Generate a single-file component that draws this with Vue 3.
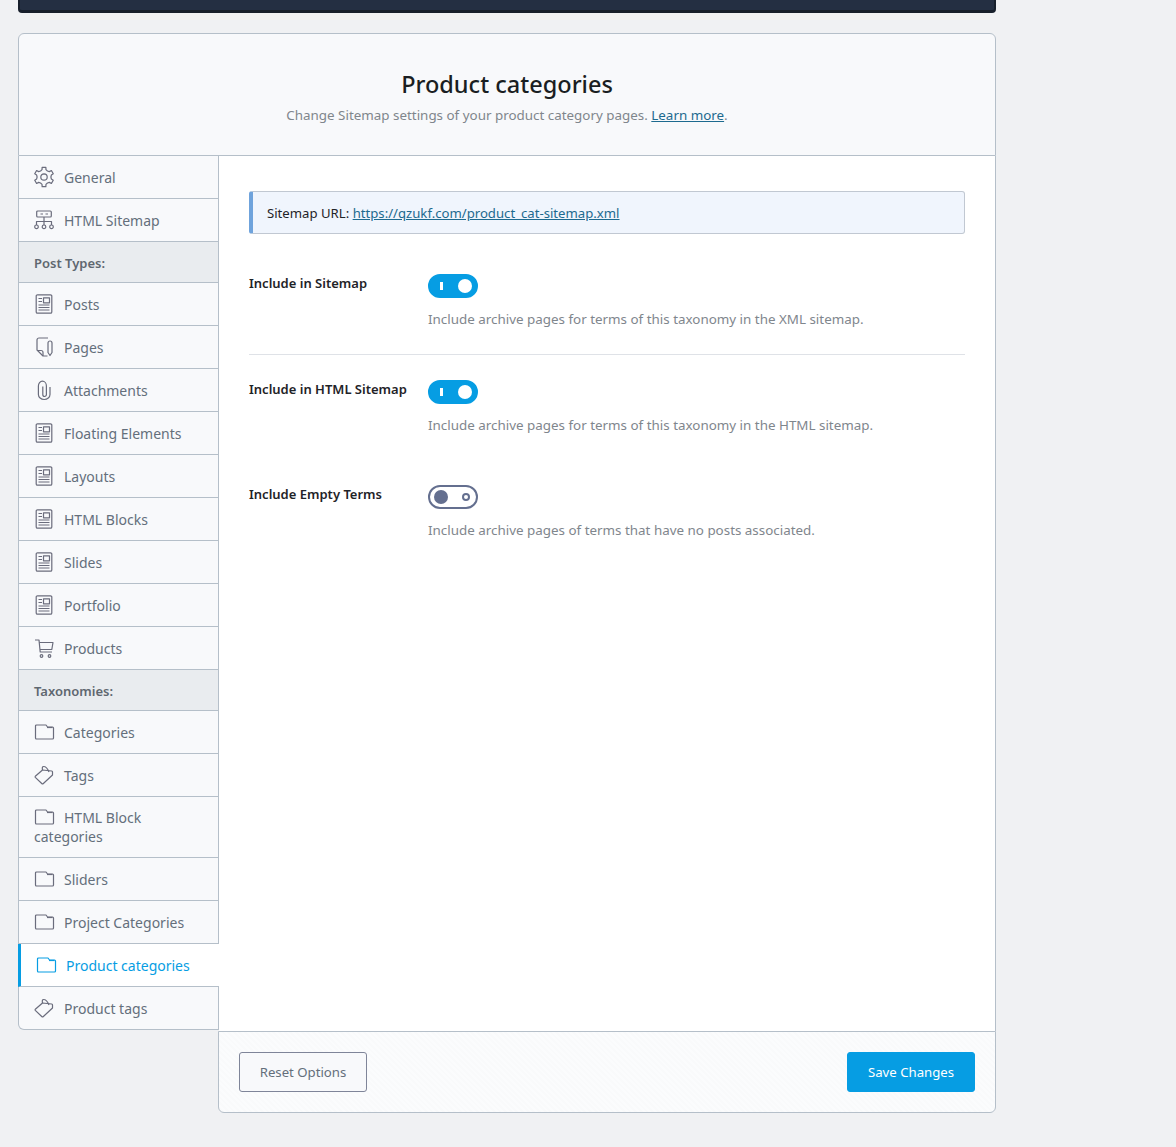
<script setup>
function gearPath() {
  const c = 10
  const pts = []
  for (let k = 0; k < 6; k++) {
    const a = ((-90 + 60 * k) * Math.PI) / 180
    const steps = [[-30, 6.9], [-15, 7.6], [-11, 9.8], [11, 9.8], [15, 7.6]]
    for (const [off, r] of steps) {
      const t = a + (off * Math.PI) / 180
      pts.push((c + r * Math.cos(t)).toFixed(2) + ' ' + (c + r * Math.sin(t)).toFixed(2))
    }
  }
  return 'M' + pts.join('L') + 'z'
}

const icons = {
  gear: [gearPath(), 'M10 6.800a3.200 3.200 0 1 0 0 6.400 3.200 3.200 0 0 0 0-6.400z'],
  sitemap: [
    'M3.700 1h12.600a1 1 0 0 1 1 1v4a1 1 0 0 1-1 1H3.700a1 1 0 0 1-1-1V2a1 1 0 0 1 1-1z',
    'M6.500 4h2.500M11.500 4h2.500',
    'M10 7v8M2.500 15v-3.500h15V15',
    'M2.500 15a1.800 1.800 0 1 0 0 3.600 1.800 1.800 0 0 0 0-3.600zM10 15a1.800 1.800 0 1 0 0 3.600 1.800 1.800 0 0 0 0-3.600zM17.500 15a1.800 1.800 0 1 0 0 3.600 1.800 1.800 0 0 0 0-3.600z',
  ],
  post: [
    'M3.500.8h13a1.300 1.300 0 0 1 1.300 1.300v15.800a1.300 1.300 0 0 1-1.300 1.300h-13a1.300 1.300 0 0 1-1.300-1.300V2.100A1.300 1.300 0 0 1 3.500.8z',
    'M9.500 3.800h6v5h-6z',
    'M4.500 4.500h3.500M4.500 7.500h3.500M4.500 11h11M4.500 13.500h11M4.500 16h11',
  ],
  page: [
    'M14 1H5a2 2 0 0 0-2 2v10l6 6h4.500',
    'M3 13.500h4a2 2 0 0 1 2 2V19',
    'M14 6a2 2 0 0 1 4 0v9.500l-2 3-2-3z',
  ],
  clip: ['M16 7v7.500a5.800 5 0 0 1-11.600 0V6a4 4.800 0 0 1 8 0v8.500a1.800 2 0 0 1-3.600 0V6.500'],
  cart: [
    'M1 2h4l1.200 12h11.800',
    'M5.300 4.500H19l-1.200 7H6',
    'M7.500 16.700a1.300 1.300 0 1 0 0 2.600 1.300 1.300 0 0 0 0-2.600zM15.500 16.700a1.300 1.300 0 1 0 0 2.600 1.300 1.300 0 0 0 0-2.600z',
  ],
  folder: ['M1.500 4a1 1 0 0 1 1-1h9.500l1.500 2h5a1 1 0 0 1 1 1v10a1 1 0 0 1-1 1h-16a1 1 0 0 1-1-1z', 'M13 5.500h5.500'],
  tag: [
    'M8.500 5 1.300 11.300a.8.8 0 0 0 0 1.100l6.700 6.300a.8.8 0 0 0 1.100 0L18.500 10V7a1 1 0 0 0-.8-1z',
    'M15 7C14 4.500 12 1.500 9.500 1.500 8.500 1.500 8 2.500 8.500 5',
  ],
}

const menu = [
  { label: 'General', icon: 'gear' },
  { label: 'HTML Sitemap', icon: 'sitemap' },
  { label: 'Post Types:', group: true },
  { label: 'Posts', icon: 'post' },
  { label: 'Pages', icon: 'page' },
  { label: 'Attachments', icon: 'clip' },
  { label: 'Floating Elements', icon: 'post' },
  { label: 'Layouts', icon: 'post' },
  { label: 'HTML Blocks', icon: 'post' },
  { label: 'Slides', icon: 'post' },
  { label: 'Portfolio', icon: 'post' },
  { label: 'Products', icon: 'cart' },
  { label: 'Taxonomies:', group: true },
  { label: 'Categories', icon: 'folder' },
  { label: 'Tags', icon: 'tag' },
  { label: 'HTML Block categories', icon: 'folder', tall: true },
  { label: 'Sliders', icon: 'folder' },
  { label: 'Project Categories', icon: 'folder' },
  { label: 'Product categories', icon: 'folder', active: true },
  { label: 'Product tags', icon: 'tag' },
]

const fields = [
  { label: 'Include in Sitemap', desc: 'Include archive pages for terms of this taxonomy in the XML sitemap.', on: true },
  { label: 'Include in HTML Sitemap', desc: 'Include archive pages for terms of this taxonomy in the HTML sitemap.', on: true },
  { label: 'Include Empty Terms', desc: 'Include archive pages of terms that have no posts associated.', on: false },
]
</script>

<template>
  <div class="page">
    <div class="topbar"></div>
    <header class="head">
      <h1>Product categories</h1>
      <p>Change Sitemap settings of your product category pages. <a href="#">Learn more</a>.</p>
    </header>
    <div class="body">
      <nav class="side">
        <template v-for="item in menu" :key="item.label">
          <div v-if="item.group" class="group">{{ item.label }}</div>
          <a v-else href="#" class="item" :class="{ active: item.active, tall: item.tall }">
            <span class="ico">
              <svg viewBox="0 0 20 20" width="20" height="20" fill="none" stroke="currentColor" stroke-width="1.2" stroke-linejoin="round">
                <path v-for="d in icons[item.icon]" :key="d" :d="d" />
              </svg>
            </span>{{ item.label }}
          </a>
        </template>
      </nav>
      <main class="main">
        <div class="content">
          <div class="notice">Sitemap URL: <a href="#">https://qzukf.com/product_cat-sitemap.xml</a></div>
          <div v-for="(f, i) in fields" :key="f.label" class="field" :class="'f' + i">
            <div class="label">{{ f.label }}</div>
            <div class="ctl">
              <span class="switch" :class="{ on: f.on }">
                <i class="mark"></i>
                <i class="knob"></i>
              </span>
              <p class="desc">{{ f.desc }}</p>
            </div>
          </div>
        </div>
        <footer class="foot">
          <button class="btn reset">Reset Options</button>
          <button class="btn save">Save Changes</button>
        </footer>
      </main>
    </div>
  </div>
</template>

<style>
html, body { background: #f0f1f3; }
</style>

<style scoped>
.page {
  width: 978px;
  padding: 0 0 34px 18px;
  font-family: "Noto Sans", sans-serif;
  font-size: 14px;
  line-height: 19px;
  color: #1f2328;
}
.topbar {
  height: 13px;
  box-sizing: border-box;
  background: #242f42;
  border-bottom: 3px solid #171f2b;
  border-right: 2px solid #171f2b;
  border-left: 2px solid #171f2b;
  border-radius: 0 0 4px 4px;
  margin-bottom: 20px;
}
.head {
  height: 123px;
  box-sizing: border-box;
  background: #f8f9fb;
  border: 1px solid #b5bfc9;
  border-radius: 6px 6px 0 0;
  text-align: center;
  padding-top: 34px;
}
.head h1 {
  margin: 0;
  font-size: 23.5px;
  line-height: 33px;
  font-weight: 500;
  color: #1a1e22;
}
.head p {
  margin: 5px 0 0;
  font-size: 13.4px;
  color: #80868c;
}
.head a { color: #1d6a8f; }
.body {
  display: flex;
  align-items: flex-start;
}
.side {
  width: 201px;
  flex: none;
  box-sizing: border-box;
  background: #f8f9fb;
  border: 1px solid #b5bfc9;
  border-top: 0;
  border-radius: 0 0 0 6px;
  position: relative;
  z-index: 1;
}
.item {
  display: block;
  padding: 12px 15px 11px;
  color: #646f7b;
  text-decoration: none;
  border-bottom: 1px solid #b5bfc9;
}
.item.tall { padding-top: 11px; }
.item:last-child { border-bottom: 0; }
.item.active {
  background: #fff;
  color: #069de3;
  border-left: 3px solid #069de3;
  margin: 0 -1px 0 -1px;
}
.ico {
  display: inline-block;
  width: 20px;
  height: 19px;
  margin-right: 10px;
  vertical-align: top;
  color: #6a6c7c;
}
.active .ico { color: #069de3; }
.ico svg {
  display: block;
  margin-top: -1px;
  overflow: visible;
}
.group {
  height: 40px;
  padding: 0 15px;
  line-height: 42px;
  font-size: 13px;
  font-weight: 600;
  color: #5f6770;
  background: #e9ecef;
  border-bottom: 1px solid #b5bfc9;
}
.main {
  flex: 1;
  margin-left: -1px;
  display: flex;
  flex-direction: column;
}
.content {
  height: 875px;
  box-sizing: border-box;
  background: #fff;
  border-right: 1px solid #b5bfc9;
  margin-left: 1px;
  padding: 35px 30px 0;
}
.notice {
  height: 43px;
  box-sizing: border-box;
  background: #f0f5fd;
  border: 1px solid #c1c8d2;
  border-left: 4px solid #6fa3dc;
  border-radius: 3px;
  padding: 12px 14px;
  font-size: 13.16px;
}
.notice a { color: #1d6a8f; }
.field {
  display: flex;
  padding-top: 40px;
}
.f0 {
  height: 121px;
  box-sizing: border-box;
  border-bottom: 1px solid #dfe2e7;
}
.f1 {
  height: 105px;
  box-sizing: border-box;
  padding-top: 25px;
}
.f2 { padding-top: 25px; }
.label {
  width: 179px;
  flex: none;
  font-size: 13px;
  font-weight: 600;
  line-height: 19px;
  color: #1f2328;
}
.switch {
  display: block;
  position: relative;
  width: 50px;
  height: 24px;
  box-sizing: border-box;
  border-radius: 12px;
  border: 2px solid #646f8f;
}
.switch.on {
  background: #069de3;
  border-color: #069de3;
}
.knob {
  position: absolute;
  top: 3px;
  left: 4px;
  width: 14px;
  height: 14px;
  border-radius: 50%;
  background: #646f8f;
}
.on .knob {
  left: 28px;
  background: #fff;
}
.mark {
  position: absolute;
  top: 6px;
  right: 6px;
  width: 8px;
  height: 8px;
  box-sizing: border-box;
  border-radius: 50%;
  border: 2px solid #646f8f;
}
.on .mark {
  top: 6px;
  left: 10px;
  right: auto;
  width: 3px;
  height: 8px;
  border: 0;
  border-radius: 0;
  background: #fff;
}
.desc {
  margin: 12px 0 0;
  color: #7f868d;
  font-size: 13.4px;
}
.foot {
  height: 82px;
  box-sizing: border-box;
  background: repeating-linear-gradient(45deg, #fbfcfd 0 2px, #f9fafb 2px 4px);
  border: 1px solid #b5bfc9;
  border-radius: 0 0 6px 6px;
  padding: 20px;
  display: flex;
  justify-content: space-between;
}
.btn {
  width: 128px;
  height: 40px;
  box-sizing: border-box;
  border-radius: 3px;
  font-family: inherit;
  font-size: 13.2px;
  padding: 0;
}
.reset {
  background: #f8f9fb;
  border: 1px solid #7f8599;
  color: #646f7b;
}
.save {
  background: #069de3;
  border: 1px solid #069de3;
  color: #fff;
}
</style>
